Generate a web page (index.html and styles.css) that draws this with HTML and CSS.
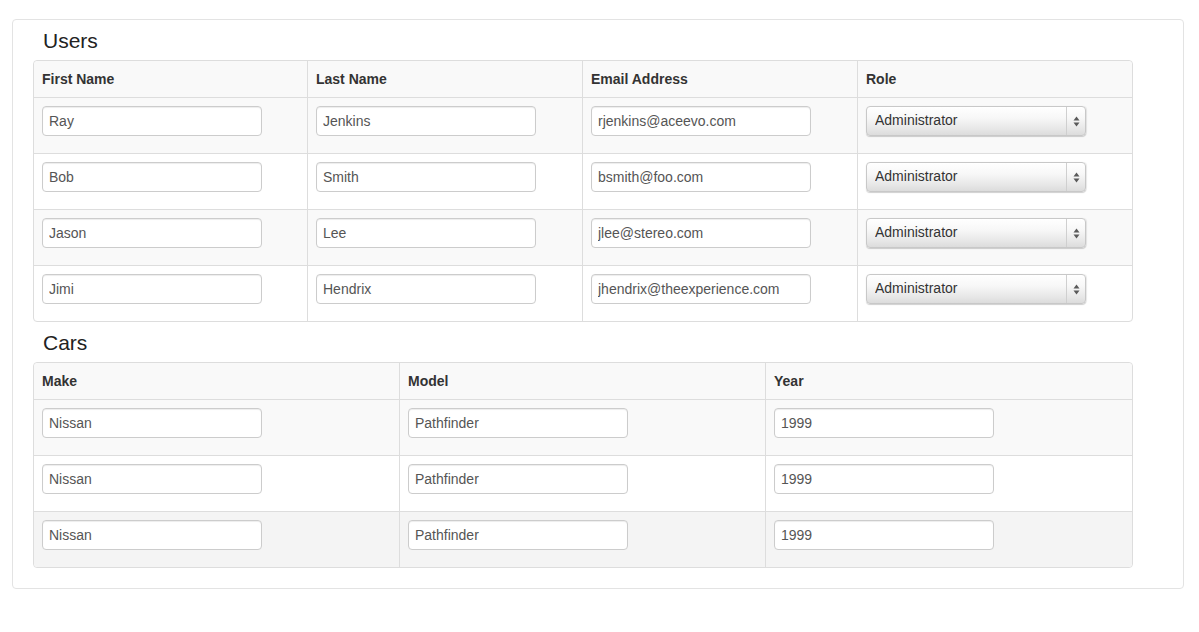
FILE: index.html
```html
<!DOCTYPE html>
<html>
<head>
<meta charset="utf-8">
<title>Users and Cars</title>
<link rel="stylesheet" href="styles.css">
</head>
<body>
<div class="well">
  <h3 class="section-title">Users</h3>
  <table class="grid grid-4">
    <thead>
      <tr><th class="c4a">First Name</th><th class="c4">Last Name</th><th class="c4">Email Address</th><th class="c4">Role</th></tr>
    </thead>
    <tbody>
      <tr>
        <td><input class="field" type="text" value="Ray"></td>
        <td><input class="field" type="text" value="Jenkins"></td>
        <td><input class="field" type="text" value="rjenkins@aceevo.com"></td>
        <td><div class="select-wrap"><select class="select"><option>Administrator</option></select><span class="select-arrows"><svg width="7" height="11" viewBox="0 0 7 11"><path d="M3.5 0.5 L6.5 4.5 L0.5 4.5 Z M3.5 10.5 L6.5 6.5 L0.5 6.5 Z" fill="#5a5a5a"/></svg></span></div></td>
      </tr>
      <tr>
        <td><input class="field" type="text" value="Bob"></td>
        <td><input class="field" type="text" value="Smith"></td>
        <td><input class="field" type="text" value="bsmith@foo.com"></td>
        <td><div class="select-wrap"><select class="select"><option>Administrator</option></select><span class="select-arrows"><svg width="7" height="11" viewBox="0 0 7 11"><path d="M3.5 0.5 L6.5 4.5 L0.5 4.5 Z M3.5 10.5 L6.5 6.5 L0.5 6.5 Z" fill="#5a5a5a"/></svg></span></div></td>
      </tr>
      <tr>
        <td><input class="field" type="text" value="Jason"></td>
        <td><input class="field" type="text" value="Lee"></td>
        <td><input class="field" type="text" value="jlee@stereo.com"></td>
        <td><div class="select-wrap"><select class="select"><option>Administrator</option></select><span class="select-arrows"><svg width="7" height="11" viewBox="0 0 7 11"><path d="M3.5 0.5 L6.5 4.5 L0.5 4.5 Z M3.5 10.5 L6.5 6.5 L0.5 6.5 Z" fill="#5a5a5a"/></svg></span></div></td>
      </tr>
      <tr>
        <td><input class="field" type="text" value="Jimi"></td>
        <td><input class="field" type="text" value="Hendrix"></td>
        <td><input class="field" type="text" value="jhendrix@theexperience.com"></td>
        <td><div class="select-wrap"><select class="select"><option>Administrator</option></select><span class="select-arrows"><svg width="7" height="11" viewBox="0 0 7 11"><path d="M3.5 0.5 L6.5 4.5 L0.5 4.5 Z M3.5 10.5 L6.5 6.5 L0.5 6.5 Z" fill="#5a5a5a"/></svg></span></div></td>
      </tr>
    </tbody>
  </table>

  <h3 class="section-title">Cars</h3>
  <table class="grid grid-3">
    <thead>
      <tr><th class="c3a">Make</th><th class="c3b">Model</th><th class="c3c">Year</th></tr>
    </thead>
    <tbody>
      <tr>
        <td><input class="field" type="text" value="Nissan"></td>
        <td><input class="field" type="text" value="Pathfinder"></td>
        <td><input class="field" type="text" value="1999"></td>
      </tr>
      <tr>
        <td><input class="field" type="text" value="Nissan"></td>
        <td><input class="field" type="text" value="Pathfinder"></td>
        <td><input class="field" type="text" value="1999"></td>
      </tr>
      <tr class="hover">
        <td><input class="field" type="text" value="Nissan"></td>
        <td><input class="field" type="text" value="Pathfinder"></td>
        <td><input class="field" type="text" value="1999"></td>
      </tr>
    </tbody>
  </table>
</div>
</body>
</html>
```

FILE: styles.css
```css
html, body {
  margin: 0;
  padding: 0;
  background: #fff;
}

body {
  font-family: "Liberation Sans", Arial, Helvetica, sans-serif;
  font-size: 14px;
  line-height: 20px;
  color: #333;
}

.well {
  margin: 19px 15px 0 12px;
  padding: 0 20px 20px 20px;
  border: 1px solid #e3e3e3;
  border-radius: 4px;
  background: #fff;
}

.section-title {
  margin: 0;
  padding: 2px 0 0 10px;
  height: 38px;
  line-height: 38px;
  font-size: 21px;
  font-weight: normal;
  color: #222;
}

.grid {
  width: 1100px;
  table-layout: fixed;
  border-collapse: separate;
  border-spacing: 0;
  border: 1px solid #ddd;
  border-radius: 4px;
}

.grid th,
.grid td {
  box-sizing: border-box;
  text-align: left;
  vertical-align: top;
  border-left: 1px solid #ddd;
  border-top: 1px solid #ddd;
}

.grid th:first-child,
.grid td:first-child {
  border-left: 0;
}

.grid thead tr:first-child th {
  border-top: 0;
}

.grid th {
  padding: 8px;
  line-height: 20px;
  font-weight: bold;
  background: #f9f9f9;
}

.c4a { width: 273px; }
.c4 { width: 275px; }
.c3a { width: 365px; }
.c3b { width: 366px; }
.c3c { width: 367px; }

.grid thead th:first-child { border-top-left-radius: 4px; }
.grid thead th:last-child { border-top-right-radius: 4px; }
.grid tbody tr:last-child td:first-child { border-bottom-left-radius: 4px; }
.grid tbody tr:last-child td:last-child { border-bottom-right-radius: 4px; }

.grid td {
  padding: 8px 8px 17px 8px;
}

.grid tbody tr:nth-child(odd) td {
  background: #f9f9f9;
}

.grid tbody tr.hover td {
  background: #f4f4f4;
}

.field {
  display: block;
  box-sizing: border-box;
  width: 220px;
  height: 30px;
  margin: 0;
  padding: 4px 6px;
  font-family: "Liberation Sans", Arial, Helvetica, sans-serif;
  font-size: 14px;
  line-height: 20px;
  color: #555;
  background: #fff;
  border: 1px solid #ccc;
  border-radius: 4px;
  box-shadow: inset 0 1px 1px rgba(0, 0, 0, 0.075);
  outline: none;
}

.select-wrap {
  position: relative;
  width: 220px;
  height: 30px;
}

.select {
  display: block;
  box-sizing: border-box;
  width: 220px;
  height: 30px;
  margin: 0;
  padding: 0 24px 2px 8px;
  -webkit-appearance: none;
  appearance: none;
  font-family: "Liberation Sans", Arial, Helvetica, sans-serif;
  font-size: 14px;
  color: #333;
  border: 1px solid #c8c8c8;
  border-radius: 4px;
  background: linear-gradient(to bottom, #ffffff 0%, #f7f7f7 40%, #e6e6e6 80%, #dcdcdc 100%);
  box-shadow: 0 1px 1px rgba(0, 0, 0, 0.18), 1px 0 1px rgba(0, 0, 0, 0.08);
  outline: none;
}

.select-arrows {
  position: absolute;
  top: 1px;
  right: 1px;
  bottom: 1px;
  width: 18px;
  border-left: 1px solid #cfcfcf;
  display: flex;
  align-items: center;
  justify-content: center;
  pointer-events: none;
}

.select-arrows svg {
  display: block;
}
```
